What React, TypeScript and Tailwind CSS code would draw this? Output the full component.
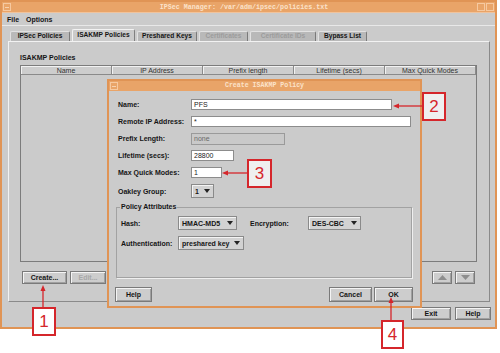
import React from 'react';

function Btn({ children, className = '', disabled = false }: { children?: React.ReactNode; className?: string; disabled?: boolean }) {
  return (
    <div
      className={`flex items-center justify-center border border-[#7a7a7a] bg-[#cdcdcd] shadow-[inset_1px_1px_0_#f4f4f4,inset_-1px_-1px_0_#a0a0a0] text-[7px] font-bold leading-none ${disabled ? 'text-[#a8a8a8]' : 'text-[#151515]'} ${className}`}
    >
      {children}
    </div>
  );
}

function Field({ value, className = '', disabled = false }: { value: string; className?: string; disabled?: boolean }) {
  return (
    <div
      className={`flex items-center pl-[2px] text-[7px] leading-none border ${disabled ? 'bg-[#c9c9c9] border-[#9a9a9a] text-[#6a6a6a] h-[12px]' : 'bg-white border-[#8c8c8c] text-[#222] h-[11px]'} ${className}`}
    >
      {value}
    </div>
  );
}

function Combo({ value, className = '' }: { value: string; className?: string }) {
  return (
    <div
      className={`flex items-center justify-between px-[3px] h-[14px] border border-[#8a8a8a] bg-[#d2d2d2] shadow-[inset_1px_1px_0_#f4f4f4] text-[7px] font-bold leading-none text-[#151515] ${className}`}
    >
      <span>{value}</span>
      <svg width="6" height="4" viewBox="0 0 6 4">
        <polygon points="0,0 6,0 3,4" fill="#222" />
      </svg>
    </div>
  );
}

function Row({ label, children, h = 'h-[17px]' }: { label: string; children: React.ReactNode; h?: string }) {
  return (
    <div className={`flex items-center ${h}`}>
      <span className="w-[73px] text-[7px] font-bold leading-none">{label}</span>
      {children}
    </div>
  );
}

function WinBox({ dash = false }: { dash?: boolean }) {
  return (
    <div className="w-[8px] h-[8px] border border-[#f6c9a0] flex items-center justify-center">
      {dash && <div className="w-[4px] h-px bg-[#f6d2b0]" />}
    </div>
  );
}

const tabs = [
  { label: 'IPSec Policies', w: 'w-[60px]' },
  { label: 'ISAKMP Policies', w: 'w-[63px]', active: true },
  { label: 'Preshared Keys', w: 'w-[60px]' },
  { label: 'Certificates', w: 'w-[49px]', disabled: true },
  { label: 'Certificate IDs', w: 'w-[66px]', disabled: true },
  { label: 'Bypass List', w: 'w-[49px]' },
];

const columns = ['Name', 'IP Address', 'Prefix length', 'Lifetime (secs)', 'Max Quick Modes'];

export default function App() {
  return (
    <div className="relative w-[500px] h-[353px] bg-white overflow-hidden font-['Liberation_Sans',Arial,sans-serif] text-[#151515]">
      {/* main window */}
      <div className="w-[497px] h-[329px] border-2 border-[#e09455] bg-[#cbcbcb] flex flex-col">
        <div className="h-[11px] bg-[#e9a468] flex items-center px-[1px] border-b border-[#f0c39c]">
          <WinBox dash />
          <span className="flex-1 text-center font-['Liberation_Mono',monospace] text-[6.7px] font-bold leading-none text-[#fbe2ca]">
            IPSec Manager: /var/adm/ipsec/policies.txt
          </span>
          <div className="flex gap-px">
            <WinBox />
            <WinBox />
          </div>
        </div>
        <div className="h-[13px] flex items-center gap-[7px] pl-[5px] text-[7px] font-bold leading-none border-b border-[#e8e8e8]">
          <span>File</span>
          <span>Options</span>
        </div>

        {/* tabs */}
        <div className="flex items-end gap-[2px] pl-[8px] mt-[3px] h-[12px]">
          {tabs.map(t => (
            <div
              key={t.label}
              className={`${t.w} flex items-center justify-center text-[6.6px] font-bold leading-none border-t border-l border-r rounded-t-[2px] ${
                t.active
                  ? 'h-[12px] bg-[#cbcbcb] border-t-[#f2f2f2] border-l-[#f2f2f2] border-r-[#808080]'
                  : 'h-[10px] bg-[#b9b9b9] border-t-[#e2e2e2] border-l-[#e2e2e2] border-r-[#7a7a7a]'
              } ${t.disabled ? 'text-[#9c9c9c]' : 'text-[#151515]'}`}
            >
              {t.label}
            </div>
          ))}
        </div>

        {/* tab panel */}
        <div className="ml-[6px] w-[482px] h-[261px] border border-t-[#f2f2f2] border-l-[#f2f2f2] border-r-[#8a8a8a] border-b-[#8a8a8a] flex flex-col">
          <span className="ml-[11px] mt-[12px] text-[7px] font-bold leading-[8px]">ISAKMP Policies</span>
          <div className="ml-[11px] mt-[3px] w-[457px] h-[197px] border border-[#7c7c7c] flex flex-col">
            <div className="flex h-[9px]">
              {columns.map(c => (
                <div
                  key={c}
                  className="flex-1 flex items-center justify-center text-[7px] leading-none text-[#333] bg-[#cdcdcd] border-r border-b border-[#8a8a8a] shadow-[inset_1px_1px_0_#f2f2f2]"
                >
                  {c}
                </div>
              ))}
            </div>
          </div>
          <div className="flex items-center mt-[9px] h-[13px]">
            <Btn className="ml-[13px] w-[45px] h-[13px]">Create...</Btn>
            <Btn disabled className="ml-[3px] w-[36px] h-[13px]">Edit...</Btn>
            <div className="flex-1" />
            <Btn className="w-[20px] h-[13px]">
              <svg width="9" height="5" viewBox="0 0 9 5"><polygon points="0,5 9,5 4.5,0" fill="#8e8e8e" /></svg>
            </Btn>
            <Btn className="ml-[3px] mr-[14px] w-[20px] h-[13px]">
              <svg width="9" height="5" viewBox="0 0 9 5"><polygon points="0,0 9,0 4.5,5" fill="#8e8e8e" /></svg>
            </Btn>
          </div>
        </div>

        <div className="flex justify-end gap-[4px] pr-[4px] mt-[5px]">
          <Btn className="w-[40px] h-[13px]">Exit</Btn>
          <Btn className="w-[36px] h-[13px]">Help</Btn>
        </div>
      </div>

      {/* dialog */}
      <div className="absolute left-[107px] top-[79px] w-[315px] h-[229px] border-2 border-[#e09455] bg-[#cbcbcb] flex flex-col">
        <div className="h-[10px] bg-[#e9a468] flex items-center px-[1px] relative">
          <WinBox dash />
          <span className="flex-1 text-center font-['Liberation_Mono',monospace] text-[6.6px] font-bold leading-none text-[#fbe2ca]">
            Create ISAKMP Policy
          </span>
          <div className="w-[8px]" />
        </div>
        <div className="flex flex-col pl-[9px] pt-[5px]">
          <Row label="Name:"><Field value="PFS" className="w-[201px]" /></Row>
          <Row label="Remote IP Address:"><Field value="*" className="w-[220px]" /></Row>
          <Row label="Prefix Length:"><Field value="none" disabled className="w-[94px]" /></Row>
          <Row label="Lifetime (secs):"><Field value="28800" className="w-[43px]" /></Row>
          <Row label="Max Quick Modes:"><Field value="1" className="w-[31px]" /></Row>
          <Row label="Oakley Group:" h="h-[20px]"><Combo value="1" className="w-[23px]" /></Row>
        </div>
        <fieldset className="ml-[7px] mt-[2px] w-[296px] h-[75px] border border-[#a2a2a2] shadow-[1px_1px_0_#efefef] px-[4px]">
          <legend className="ml-[-1px] px-px text-[7px] font-bold leading-[8px]">Policy Attributes</legend>
          <div className="flex items-center h-[14px] mt-[5px]">
            <span className="w-[57px] text-[7px] font-bold leading-none">Hash:</span>
            <Combo value="HMAC-MD5" className="w-[59px]" />
            <span className="ml-[13px] w-[58px] text-[7px] font-bold leading-none">Encryption:</span>
            <Combo value="DES-CBC" className="w-[53px]" />
          </div>
          <div className="flex items-center h-[14px] mt-[6px]">
            <span className="w-[57px] text-[7px] font-bold leading-none">Authentication:</span>
            <Combo value="preshared key" className="w-[66px]" />
          </div>
        </fieldset>
        <div className="flex items-center mt-[9px] h-[15px] pl-[6px] pr-[7px]">
          <Btn className="w-[37px] h-[15px]">Help</Btn>
          <div className="flex-1" />
          <Btn className="w-[43px] h-[15px]">Cancel</Btn>
          <Btn className="ml-[2px] w-[39px] h-[15px]">OK</Btn>
        </div>
      </div>

      {/* callout arrows */}
      <svg className="absolute inset-0 pointer-events-none" width="500" height="353">
        <line x1="422" y1="106" x2="397" y2="106" stroke="#d5262b" strokeWidth="1.3" />
        <polygon points="393,106 399,103.5 399,108.5" fill="#d5262b" />
        <line x1="247" y1="173" x2="226" y2="173" stroke="#d5262b" strokeWidth="1.3" />
        <polygon points="222,173 228,170.5 228,175.5" fill="#d5262b" />
        <line x1="43" y1="307" x2="43" y2="289" stroke="#d5262b" strokeWidth="1.3" />
        <polygon points="43,285 40.5,291 45.5,291" fill="#d5262b" />
        <line x1="391" y1="320" x2="391" y2="301" stroke="#d5262b" strokeWidth="1.3" />
        <polygon points="391,297 388.5,303 393.5,303" fill="#d5262b" />
      </svg>

      {/* callout boxes */}
      <div className="absolute left-[422px] top-[92px] w-[24px] h-[29px] border-2 border-[#d5262b] bg-[#efefef] flex items-center justify-center text-[17px] leading-none text-[#d5262b]">2</div>
      <div className="absolute left-[247px] top-[159px] w-[25px] h-[29px] border-2 border-[#d5262b] bg-[#efefef] flex items-center justify-center text-[17px] leading-none text-[#d5262b]">3</div>
      <div className="absolute left-[32px] top-[307px] w-[24px] h-[29px] border-2 border-[#d5262b] bg-white flex items-center justify-center text-[17px] leading-none text-[#d5262b]">1</div>
      <div className="absolute left-[381px] top-[320px] w-[23px] h-[29px] border-2 border-[#d5262b] bg-white flex items-center justify-center text-[17px] leading-none text-[#d5262b]">4</div>
    </div>
  );
}
